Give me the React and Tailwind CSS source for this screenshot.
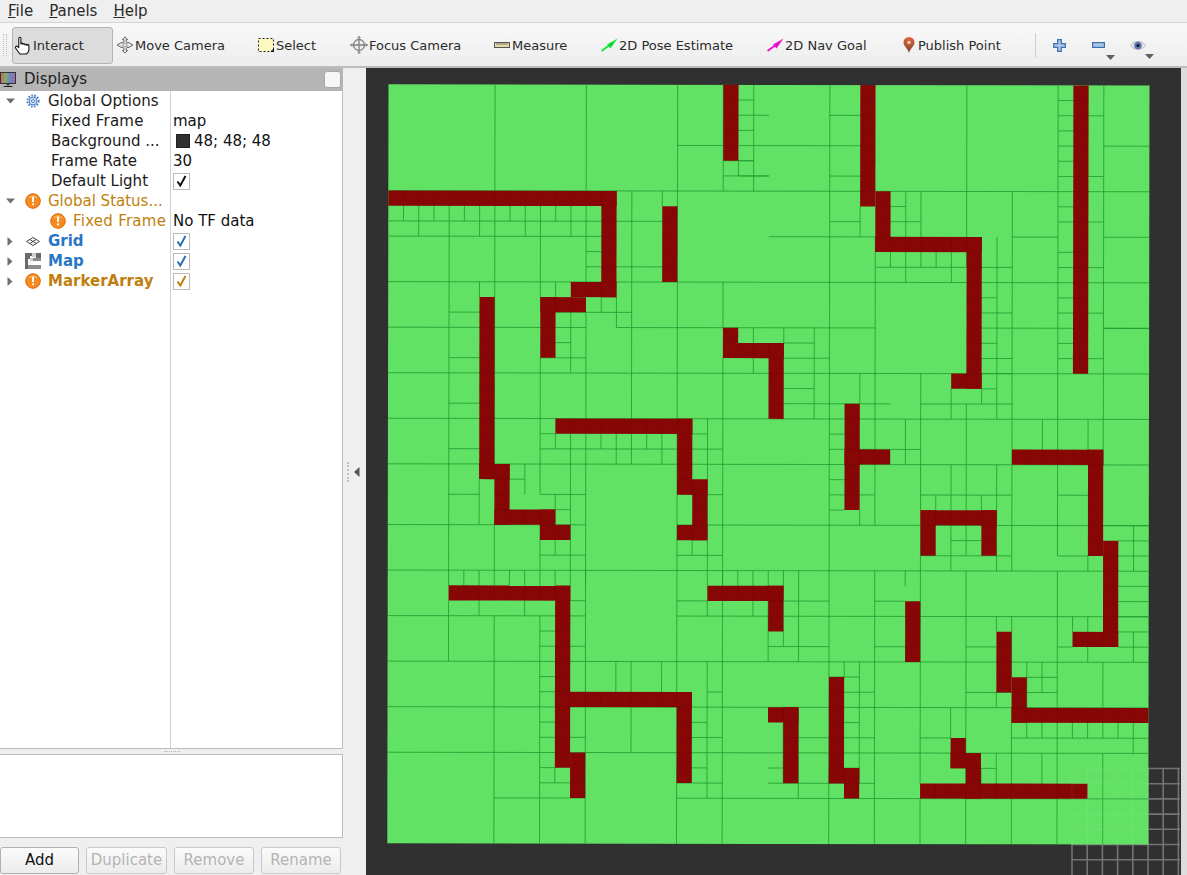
import React from "react";

const WALLS = [[0,15,7,8],[14,15,7,14],[12,15,13,14],[10,13,14,15],[10,11,14,18],[6,7,14,26],[18,19,8,13],[22,23,0,5],[22,23,16,18],[22,26,17,18],[25,26,17,22],[31,32,0,8],[32,33,7,11],[32,39,10,11],[38,39,10,20],[37,39,19,20],[45,46,0,19],[30,31,21,28],[30,33,24,25],[41,47,24,25],[46,47,24,31],[47,48,30,37],[45,48,36,37],[35,40,28,29],[35,36,28,31],[39,40,28,31],[34,35,34,38],[40,41,36,40],[41,42,39,42],[41,50,41,42],[21,26,33,34],[25,26,33,36],[25,27,41,42],[26,27,41,46],[29,30,39,46],[29,31,45,46],[30,31,45,47],[35,46,46,47],[38,39,44,47],[37,39,44,45],[37,38,43,45],[6,8,25,26],[7,8,25,29],[7,11,28,29],[10,11,28,30],[10,12,29,30],[19,20,22,27],[19,21,26,27],[20,21,26,30],[19,21,29,30],[4,12,33,34],[11,12,33,45],[12,13,44,47],[11,20,40,41],[19,20,40,46],[11,20,22,23]];

const H = [[0,50,[7,13,19,22,25,38,32,41,44]],[19,22,[4]],[23,25,[2,4,6]],[25,31,[4]],[47,50,[4,10,16,29,31,35]],[23,24,[1,3,5]],[22,24,[5,6]],[24,25,[6]],[29,31,[2,6,9]],[46,47,[2,6,9,12,15,18]],[33,34,[8]],[0,14,[9,10]],[15,18,[9,12]],[33,35,[9]],[25,32,[10]],[41,44,[10,16]],[13,14,[11,12]],[32,38,[12]],[39,41,[12,15,16,18,19]],[39,40,[14,17,20]],[4,6,[15,18,21,24,27]],[11,16,[15]],[0,13,[16]],[15,32,[16]],[44,45,[1,2,3,4,5,6,8,9,11,12,14,15,16,17,18]],[47,50,[16]],[11,12,[17,28]],[26,28,[17,20]],[10,13,[18,27,31]],[26,29,[18,34]],[26,33,[21]],[35,41,[21,27,31]],[10,11,[23,36,37,39,40,42,43,45]],[20,21,[23,42,45]],[29,30,[23,24,26,27,28]],[10,22,[24]],[31,35,[24]],[8,9,[26]],[21,22,[27,40]],[31,32,[27]],[44,46,[27,31]],[0,13,[29,35]],[19,50,[29,35]],[37,39,[30]],[48,50,[30,33,34,36,37]],[19,22,[31]],[19,21,[34]],[12,13,[34,37,43]],[32,34,[34,37]],[25,29,[37]],[38,40,[37]],[44,45,[37]],[29,31,[39]],[42,44,[39,40]],[30,32,[40,43]],[38,41,[40]],[30,31,[42,45]],[20,22,[43]],[27,29,[43]],[35,37,[43]],[41,50,[43]],[25,26,[45]],[39,40,[45]],[10,12,[46]],[19,22,[46]],[25,32,[46]],[7,13,[47]],[19,50,[47]]];

const V = [[0,7,[7,13,19,22,24]],[5,6,[23]],[0,25,[29]],[8,10,[31]],[0,10,[38]],[0,25,[44,47]],[8,9,[1,2,3,4,5,6,7,8,9,10,11,12,13]],[9,10,[2,4,6,7,9,10,12,13]],[7,8,[18]],[7,13,[16]],[7,25,[19]],[10,13,[4,7,10,13]],[13,14,[6,10,11]],[13,25,[4,7]],[14,15,[14]],[14,16,[15]],[15,19,[12]],[15,22,[13]],[13,22,[16]],[13,16,[22]],[18,25,[22]],[16,17,[24]],[18,19,[24]],[18,25,[10]],[23,24,[11,12,13,14,15,16,17,18]],[24,25,[12,13,15,16,18]],[22,25,[21]],[7,10,[34,35]],[7,25,[41]],[16,17,[26]],[16,22,[28]],[19,21,[31]],[10,25,[32]],[19,25,[35]],[20,22,[37]],[20,21,[39]],[10,22,[40]],[21,25,[38]],[11,12,[33,34,35,36,37,38]],[12,13,[34,37]],[22,25,[34,43,46]],[25,33,[4]],[34,38,[4]],[26,29,[6]],[29,32,[7]],[32,33,[5,6,7,8,9,10,11,12,13]],[25,27,[9,10]],[27,29,[11]],[25,32,[12,19,21]],[25,50,[13,22]],[30,31,[11,20]],[29,32,[10]],[34,35,[6,9,21,24]],[35,38,[7,10]],[38,50,[7,10,19]],[45,46,[11]],[38,40,[15,16,18]],[41,44,[16]],[38,47,[21]],[32,38,[19,25]],[32,33,[21,22,23,24]],[25,50,[29]],[25,29,[32]],[28,29,[31]],[25,28,[35,37,38]],[27,28,[36,39]],[25,32,[40,41]],[25,31,[44]],[29,32,[35,37,49]],[29,31,[38]],[31,32,[46]],[32,37,[26]],[32,38,[27,32,35,44]],[32,33,[34]],[32,50,[38]],[35,38,[41]],[35,36,[40,45,46]],[37,38,[46]],[36,38,[49]],[38,39,[30,41,43]],[38,46,[31]],[38,47,[32]],[38,46,[35]],[40,41,[40]],[38,41,[42]],[39,40,[43]],[38,50,[44]],[42,43,[42,43,45,46,47,48,49]],[43,44,[49]],[41,43,[37]],[42,47,[41]],[44,47,[40,43,47]],[45,46,[39]],[41,47,[27]],[42,46,[26]],[47,50,[32,35,41,47]],[38,41,[47]]];

function MapView() {
  const gridX = [0,1,2,3,4,5,6,7];
  const gridY = [0,1,2,3,4,5,6];
  return (
    <svg width="815" height="807" viewBox="0 0 815 807" className="block">
      <rect width="815" height="807" fill="#303030" />
      <g stroke="#737373" strokeWidth="1.6">
        {gridX.map((i) => <line key={i} x1={706 + i * 15.2} y1="700" x2={706 + i * 15.2} y2="807" />)}
        {gridY.map((i) => <line key={i} x1="706" y1={700.5 + i * 15.2} x2="814" y2={700.5 + i * 15.2} />)}
      </g>
      <g transform="matrix(15.22 0.024 -0.024 15.18 22.5 16.3)">
        <rect width="50" height="50" fill="#61e264" />
        <g stroke="#1f9a30" strokeWidth="1" strokeOpacity="0.8" fill="none">
          {H.flatMap(([a, b, rows]) => rows.map((r) => <line key={`h${a}-${b}-${r}`} x1={a} x2={b} y1={r} y2={r} vectorEffect="non-scaling-stroke" />))}
          {V.flatMap(([a, b, cols]) => cols.map((c) => <line key={`v${a}-${b}-${c}`} y1={a} y2={b} x1={c} x2={c} vectorEffect="non-scaling-stroke" />))}
        </g>
        <g fill="#870707">
          {WALLS.map(([a, b, c, d]) => <rect key={`${a}-${b}-${c}-${d}`} x={a} y={c} width={b - a} height={d - c} />)}
        </g>
        <g stroke="#5c0505" strokeWidth="1" strokeOpacity="0.2">
          {WALLS.flatMap(([a, b, c, d]) => {
            const out = [];
            for (let x = a + 1; x < b; x++) out.push(<line key={`wx${a}${b}${c}${d}-${x}`} x1={x} x2={x} y1={c} y2={d} vectorEffect="non-scaling-stroke" />);
            for (let y = c + 1; y < d; y++) out.push(<line key={`wy${a}${b}${c}${d}-${y}`} x1={a} x2={b} y1={y} y2={y} vectorEffect="non-scaling-stroke" />);
            return out;
          })}
        </g>
      </g>
      <g stroke="#ffffff" strokeWidth="1.500" strokeOpacity="0.05">
        {gridX.slice(0, 6).map((i) => <line key={i} x1={706 + i * 15.2} y1="700" x2={706 + i * 15.2} y2="777" />)}
        {gridY.slice(0, 6).map((i) => <line key={i} x1="706" y1={700.5 + i * 15.2} x2="783" y2={700.5 + i * 15.2} />)}
      </g>
    </svg>
  );
}

const HandIcon = () => (
  <svg width="18" height="19" viewBox="0 0 17 18" fill="#fff" stroke="#111" strokeWidth="1" strokeLinejoin="round">
    <path d="M4.500 11V2.200c0-1.400 2-1.400 2 0V7.500c0-1 1.900-1 1.900 0v.5c0-1 1.900-1 1.900 0v.5c0-1 1.900-1 1.900 0v.4c0-1 1.900-1 1.900 0v3.600c0 2-1 3.600-2.500 4.500H5.500L1.600 11.600c-.9-1.200.5-2.500 1.500-1.700z" />
  </svg>
);
const MoveIcon = () => (
  <svg width="18" height="18" viewBox="0 0 18 18" fill="#e8e8e8" stroke="#666" strokeWidth="1" strokeLinejoin="round">
    <path d="M9 .8l2.600 2.800h-1.400v2.200l1.800 1.400V6.200l5 2.800-5 2.800v-1l-1.800 1.400v2.200h1.400L9 17.200l-2.600-2.800h1.400v-2.200L6 10.800v1L1 9l5-2.800v1l1.800-1.400V3.600H6.400z" />
    <circle cx="9" cy="9" r="2" fill="none" stroke="#999" />
  </svg>
);
const SelectIcon = () => (
  <svg width="16" height="14" viewBox="0 0 16 14">
    <rect x=".5" y=".5" width="15" height="13" fill="#fbf8c0" stroke="#222" strokeWidth="1" strokeDasharray="2 2" />
    <path d="M13 14h3v-3h-1.400v1.600H13z" fill="#111" />
  </svg>
);
const FocusIcon = () => (
  <svg width="18" height="18" viewBox="0 0 18 18" fill="none" stroke="#808080">
    <circle cx="9" cy="9" r="5.500" fill="#eee" strokeWidth="1.300" />
    <path d="M9 .5v17M.5 9h17" strokeWidth="1.300" />
    <path d="M7.500 2 9 .5 10.500 2M7.500 16 9 17.500 10.500 16M2 7.500.5 9 2 10.500M16 7.500 17.500 9 16 10.500" strokeWidth="1" />
  </svg>
);
const RulerIcon = () => (
  <svg width="16" height="6" viewBox="0 0 16 6">
    <rect x=".5" y=".5" width="15" height="5" fill="#e3d8a8" stroke="#555" />
    <path d="M3 1v2M5 1v2M7 1v2M9 1v2M11 1v2M13 1v2" stroke="#666" strokeWidth=".8" />
  </svg>
);
const ArrowIcon = ({ c }) => (
  <svg width="17" height="14" viewBox="0 0 17 14">
    <path d="M0.500 13 10 6" stroke={c} strokeWidth="2" />
    <path d="M16.500 .5 6 6.500 9.500 10.500z" fill={c} />
    <path d="M11 5 9 8" stroke="#063" strokeWidth="1" opacity=".5" />
  </svg>
);
const PinIcon = () => (
  <svg width="12" height="16" viewBox="0 0 12 16">
    <defs>
      <linearGradient id="pg" x1="0" y1="0" x2="0" y2="1">
        <stop offset="0" stopColor="#e2603a" />
        <stop offset="1" stopColor="#7a4a2c" />
      </linearGradient>
    </defs>
    <path d="M6 16C4.500 11 .5 9 .5 5.500a5.500 5.500 0 0 1 11 0C11.500 9 7.500 11 6 16z" fill="url(#pg)" />
    <circle cx="6" cy="5.500" r="1.800" fill="#f3c9b0" />
  </svg>
);
const PlusIcon = () => (
  <svg width="13" height="13" viewBox="0 0 13 13">
    <path d="M4.700.7h3.600v4h4v3.600h-4v4H4.700v-4h-4V4.700h4z" fill="#a9c6ea" stroke="#3f6fae" strokeWidth="1.200" />
  </svg>
);
const MinusIcon = () => (
  <svg width="13" height="6" viewBox="0 0 13 6">
    <rect x=".6" y=".6" width="11.800" height="4.800" fill="#a9c6ea" stroke="#3f6fae" strokeWidth="1.200" />
  </svg>
);
const EyeIcon = () => (
  <svg width="16" height="11" viewBox="0 0 16 11">
    <path d="M.5 5.500C4 .2 12 .2 15.500 5.500 12 10.800 4 10.800.5 5.500z" fill="#e6e6e6" stroke="#bbb" />
    <circle cx="8" cy="5.500" r="3.800" fill="#5f78b8" />
    <circle cx="8" cy="5.500" r="1.500" fill="#111" />
  </svg>
);
const MonitorIcon = () => (
  <svg width="16" height="16" viewBox="0 0 16 16">
    <defs>
      <linearGradient id="mg" x1="0" y1="0" x2="1" y2="0">
        <stop offset="0" stopColor="#d9615c" />
        <stop offset=".35" stopColor="#7fae6a" />
        <stop offset=".65" stopColor="#6b84c8" />
        <stop offset="1" stopColor="#a56aa0" />
      </linearGradient>
    </defs>
    <rect x=".5" y=".5" width="15" height="11" fill="url(#mg)" stroke="#333" />
    <path d="M6.500 12h3v1.500h-3z" fill="#444" />
    <path d="M3.500 14h9v1h-9z" fill="#222" />
  </svg>
);
const GearIcon = () => (
  <svg width="14" height="14" viewBox="0 0 14 14">
    <g stroke="#4a7fc4" strokeWidth="2" strokeDasharray="1.600 1.400">
      <circle cx="7" cy="7" r="5.600" fill="none" />
    </g>
    <circle cx="7" cy="7" r="4" fill="#cfe0f4" stroke="#4a7fc4" />
    <circle cx="7" cy="7" r="1.500" fill="#fff" stroke="#4a7fc4" />
  </svg>
);
const WarnIcon = () => (
  <svg width="16" height="16" viewBox="0 0 16 16">
    <circle cx="8" cy="8" r="7.300" fill="#f58a1f" stroke="#d8690f" />
    <path d="M3 5a6 6 0 0 1 10 0z" fill="#ffb566" opacity=".7" />
    <rect x="7" y="3.500" width="2" height="5.500" rx=".6" fill="#fff" />
    <rect x="7" y="10.300" width="2" height="2" rx=".6" fill="#fff" />
  </svg>
);
const GridIcon = () => (
  <svg width="14" height="9" viewBox="0 0 14 9" fill="none" stroke="#444" strokeWidth="1">
    <path d="M7 .5 13.500 4.500 7 8.500.5 4.500z" />
    <path d="M3.800 2.500 10.300 6.500M10.300 2.500 3.800 6.500" />
  </svg>
);
const MapIcon = () => (
  <svg width="16" height="16" viewBox="0 0 16 16">
    <path d="M0 0h7v3H0zM0 3h3v7H0zM3 3h2v3H3zM0 10h3v6H0zM11 0h5v5h-5z" fill="#6a6a6a" />
    <path d="M7 0h4v4H7zM5 5h3v4H5z" fill="#cfcfcf" />
    <path d="M8 5h8v3H8zM3 12h13v4H3z" fill="#8d8d8d" />
    <path d="M3 8h5v4H3z" fill="#f4f4f4" />
  </svg>
);

const Check = ({ color }) => (
  <span className="flex h-[17px] w-[17px] items-center justify-center border border-[#b9b9b9] bg-white">
    <svg width="11" height="12" viewBox="0 0 11 12" fill="none" stroke={color} strokeWidth="2">
      <path d="M1.500 6.500 4.300 10.500 9.500 1" />
    </svg>
  </span>
);

const Tri = ({ open }) =>
  open ? (
    <svg width="9" height="6" viewBox="0 0 9 6"><path d="M0 .5h9L4.500 5.500z" fill="#6f6f6f" /></svg>
  ) : (
    <svg width="6" height="9" viewBox="0 0 6 9"><path d="M.5 0v9L5.500 4.500z" fill="#6f6f6f" /></svg>
  );

const Row = ({ tri, icon, iconX = 25, textX = 48, label, labelClass = "text-[#1a1a1a]", value }) => (
  <div className="flex h-5 items-center">
    <div className="relative flex h-5 w-[171px] shrink-0 items-center border-r border-[#d0d0d0]">
      <span className="flex w-[20px] shrink-0 items-center justify-center">{tri}</span>
      <span className="flex shrink-0 items-center justify-center" style={{ width: 16, marginLeft: iconX - 20 }}>{icon}</span>
      <span className={`whitespace-nowrap ${labelClass}`} style={{ marginLeft: textX - iconX - 16 }}>{label}</span>
    </div>
    <div className="flex flex-1 items-center pl-[2px] text-[#111]">{value}</div>
  </div>
);

const ToolButton = ({ icon, label, width, iconW }) => (
  <div className="flex h-full shrink-0 items-center" style={{ width }}>
    <span className="flex shrink-0 items-center justify-start" style={{ width: iconW }}>{icon}</span>
    <span className="whitespace-nowrap">{label}</span>
  </div>
);

const SmallArrow = () => (
  <svg width="9" height="5" viewBox="0 0 9 5" className="absolute"><path d="M0 0h9L4.500 5z" fill="#5f5f5f" /></svg>
);

const PanelBtn = ({ children, disabled, w }) => (
  <button className={`flex h-[27px] items-center justify-center rounded-[3px] border bg-gradient-to-b from-[#fbfbfb] to-[#ececec] text-[15px] ${disabled ? "border-[#c9c9c9] text-[#b4b4b4]" : "border-[#b0b0b0] text-[#111]"}`} style={{ width: w }}>
    {children}
  </button>
);

export default function App() {
  return (
    <div className="flex h-[875px] w-[1187px] flex-col overflow-hidden bg-[#efefef] text-[15px] leading-none text-[#222]" style={{ fontFamily: '"DejaVu Sans", sans-serif' }}>
      <div className="flex h-[23px] shrink-0 items-center gap-[16px] border-b border-[#d4d4d4] pl-[8px] text-[#2a2a2a]">
        <span><u>F</u>ile</span>
        <span><u>P</u>anels</span>
        <span><u>H</u>elp</span>
      </div>

      <div className="flex h-[45px] shrink-0 items-center border-b-2 border-[#bdbdbd] bg-gradient-to-b from-[#f9f9f9] to-[#ededed] pl-[3px] pt-px text-[13px] text-[#2b2b2b]">
        <div className="mr-[5px] h-[22px] w-[4px] shrink-0 border-x border-dotted border-[#bcbcbc]" />
        <div className="flex h-[37px] w-[101px] shrink-0 items-center rounded-[3px] border border-[#b4b4b4] bg-[#dcdcdc] pl-[1px]">
          <span className="flex w-[19px] shrink-0 justify-start"><HandIcon /></span>
          <span>Interact</span>
        </div>
        <div className="ml-[3px] flex h-full items-center">
          <ToolButton icon={<MoveIcon />} label="Move Camera" width={142} iconW={19} />
          <ToolButton icon={<SelectIcon />} label="Select" width={92} iconW={18} />
          <ToolButton icon={<FocusIcon />} label="Focus Camera" width={144} iconW={19} />
          <ToolButton icon={<RulerIcon />} label="Measure" width={107} iconW={18} />
          <ToolButton icon={<ArrowIcon c="#12e83a" />} label="2D Pose Estimate" width={166} iconW={18} />
          <ToolButton icon={<ArrowIcon c="#f010d8" />} label="2D Nav Goal" width={136} iconW={18} />
          <ToolButton icon={<PinIcon />} label="Publish Point" width={132} iconW={15} />
        </div>
        <div className="h-[25px] w-px shrink-0 bg-[#cfcfcf]" />
        <div className="relative ml-[17px] flex w-[13px] justify-center"><PlusIcon /></div>
        <div className="relative ml-[26px] flex w-[13px] items-center justify-center">
          <MinusIcon />
          <span className="absolute left-[14px] top-[13px]"><SmallArrow /></span>
        </div>
        <div className="relative ml-[25px] flex w-[16px] items-center justify-center">
          <EyeIcon />
          <span className="absolute left-[15px] top-[14px]"><SmallArrow /></span>
        </div>
      </div>

      <div className="flex min-h-0 flex-1">
        <div className="flex w-[343px] shrink-0 flex-col">
          <div className="flex h-[23px] shrink-0 items-center justify-between bg-[#b5b5b5] pr-[2px] text-[#1c1c1c]">
            <div className="flex items-center gap-[8px]"><MonitorIcon /><span>Displays</span></div>
            <span className="h-[17px] w-[17px] rounded-[3px] border border-[#a8a8a8] bg-[#f6f6f6]" />
          </div>
          <div className="flex min-h-0 flex-1 flex-col border-b border-r border-[#bcbcbc] bg-white">
            <Row tri={<Tri open />} icon={<GearIcon />} iconX={25} label="Global Options" />
            <Row icon={null} iconX={20} textX={51} label="Fixed Frame" labelClass="text-[#1a1a1a] tracking-[0.2px]" value="map" />
            <Row icon={null} iconX={20} textX={51} label="Background ..." value={<span className="flex items-center gap-[4px]"><span className="ml-[3px] h-[14px] w-[14px] border border-[#1f1f1f] bg-[#303030]" />48; 48; 48</span>} />
            <Row icon={null} iconX={20} textX={51} label="Frame Rate" value="30" />
            <Row icon={null} iconX={20} textX={51} label="Default Light" value={<Check color="#111" />} />
            <Row tri={<Tri open />} icon={<WarnIcon />} label="Global Status..." labelClass="text-[#c07f0d]" />
            <Row icon={<WarnIcon />} iconX={50} textX={73} label="Fixed Frame" labelClass="text-[#c07f0d] tracking-[0.25px]" value="No TF data" />
            <Row tri={<Tri />} icon={<GridIcon />} label="Grid" labelClass="font-bold text-[#2a76c6]" value={<Check color="#2a6fb5" />} />
            <Row tri={<Tri />} icon={<MapIcon />} label="Map" labelClass="font-bold text-[#2a76c6]" value={<Check color="#2a6fb5" />} />
            <Row tri={<Tri />} icon={<WarnIcon />} label="MarkerArray" labelClass="font-bold text-[#c07f0d]" value={<Check color="#c07f0d" />} />
            <div className="flex-1"><div className="h-full w-[171px] border-r border-[#d0d0d0]" /></div>
          </div>
          <div className="flex h-[5px] shrink-0 items-center justify-center"><span className="w-[16px] border-t border-dotted border-[#b5b5b5]" /></div>
          <div className="h-[84px] shrink-0 border border-l-0 border-[#bcbcbc] bg-white" />
          <div className="flex h-[37px] shrink-0 items-end justify-between pb-[1px] pr-[2px]">
            <PanelBtn w={79}>Add</PanelBtn>
            <div className="flex gap-[7px]">
              <PanelBtn disabled w={81}>Duplicate</PanelBtn>
              <PanelBtn disabled w={80}>Remove</PanelBtn>
              <PanelBtn disabled w={80}>Rename</PanelBtn>
            </div>
          </div>
        </div>

        <div className="flex w-[23px] shrink-0 items-center">
          <span className="ml-[4px] h-[20px] w-[2px] border-l-2 border-dotted border-[#c4c4c4]" />
          <svg width="6" height="10" viewBox="0 0 6 10" className="ml-[5px]"><path d="M5.500 0v10L0 5z" fill="#555" /></svg>
        </div>

        <div className="min-w-0 w-[815px] shrink-0 overflow-hidden"><MapView /></div>
        <div className="flex-1 bg-[#dcdcdc]" />
      </div>
    </div>
  );
}
